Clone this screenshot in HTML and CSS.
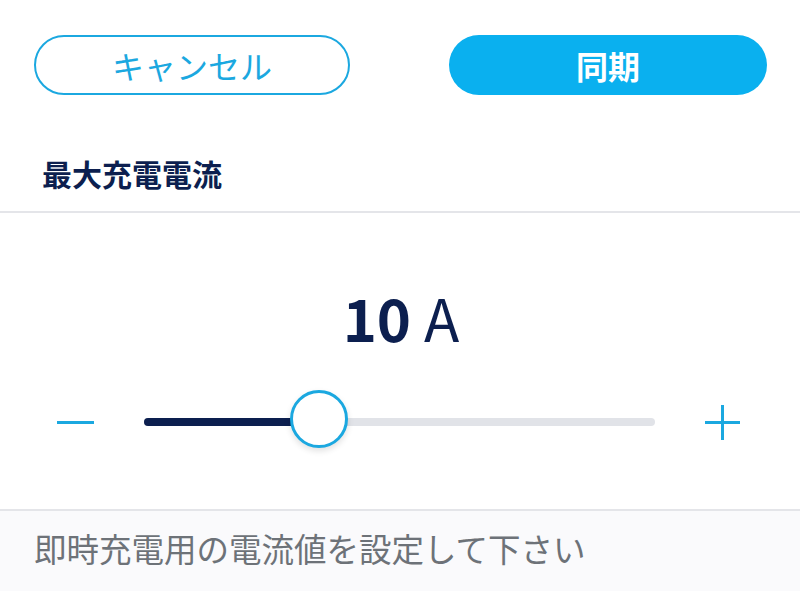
FILE: index.html
```html
<!DOCTYPE html>
<html>
<head>
  <title>最大充電電流</title>
  <link rel="stylesheet" href="styles.css">
</head>
<body>
  <div class="actions">
    <button class="btn btn-cancel">キャンセル</button>
    <button class="btn btn-sync">同期</button>
  </div>

  <h2 class="section-title">最大充電電流</h2>

  <div class="current">
    <div class="value"><b>10</b> A</div>
    <div class="slider">
      <span class="minus"></span>
      <div class="track">
        <div class="fill" style="width: 175px"></div>
        <div class="thumb" style="left: 175px"></div>
      </div>
      <span class="plus"></span>
    </div>
  </div>

  <p class="hint">即時充電用の電流値を設定して下さい</p>
</body>
</html>
```

FILE: styles.css
```css
* { box-sizing: border-box; }
body {
  margin: 0;
  background: #fff;
  font-family: "Noto Sans CJK JP", "Noto Sans", sans-serif;
  color: #0c1f4f;
  height: 592px;
  overflow: hidden;
}

.actions {
  display: grid;
  grid-template-columns: 316px 318px;
  column-gap: 99px;
  padding: 35px 0 0 34px;
}
.btn {
  height: 60px;
  border-radius: 30px;
  font-family: inherit;
  font-size: 32px;
  line-height: 1;
  cursor: pointer;
}
.btn-cancel {
  background: #fff;
  border: 2px solid #1ba8e0;
  color: #1ba8e0;
  font-weight: 400;
}
.btn-sync {
  background: #0ab0ef;
  border: none;
  color: #fff;
  font-weight: 700;
}

.section-title {
  margin: 0;
  padding: 61px 0 0 42px;
  height: 118px;
  font-size: 30px;
  font-weight: 700;
  line-height: 34px;
  border-bottom: 2px solid #e4e5e9;
}

.current {
  height: 298px;
  padding-top: 74px;
  border-bottom: 2px solid #e4e5e9;
}
.value {
  text-align: center;
  font-size: 58px;
  line-height: 60px;
  font-weight: 400;
  padding-left: 2px;
}
.value b { font-weight: 700; }

.slider {
  display: flex;
  align-items: center;
  gap: 50px;
  padding: 0 60px 0 57px;
  margin-top: 55px;
  height: 40px;
}
.minus {
  width: 37px;
  height: 3px;
  background: #1ba8e0;
}
.plus {
  position: relative;
  width: 35px;
  height: 35px;
}
.plus::before, .plus::after {
  content: "";
  position: absolute;
  background: #1ba8e0;
}
.plus::before { left: 0; right: 0; top: 16px; height: 3px; }
.plus::after { top: 0; bottom: 0; left: 16px; width: 3px; }

.track {
  position: relative;
  flex: 1;
  height: 8px;
  border-radius: 4px;
  background: #e1e3e8;
}
.fill {
  height: 100%;
  border-radius: 4px 0 0 4px;
  background: #0c1f4f;
}
.thumb {
  position: absolute;
  top: 50%;
  width: 58px;
  height: 58px;
  margin: -32px 0 0 -29px;
  border-radius: 50%;
  background: #fff;
  border: 3px solid #1ba8e0;
  box-shadow: 0 3px 6px rgba(0, 0, 0, 0.12);
}

.hint {
  margin: 0;
  padding: 17px 0 0 34px;
  height: 80px;
  background: #fafafc;
  font-size: 32.5px;
  line-height: 40px;
  color: #6d7278;
}
```
